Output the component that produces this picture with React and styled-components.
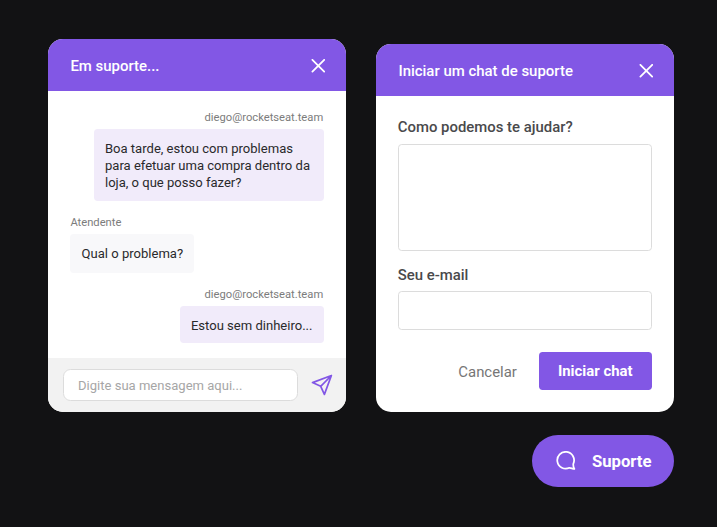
import React from "react";
import styled, { createGlobalStyle } from "styled-components";

const purple = "#8257e5";

const GlobalStyle = createGlobalStyle`
  * { box-sizing: border-box; }
  body { margin: 0; background: #121214; }
  button, input, textarea { font-family: inherit; }
`;

const Page = styled.main`
  width: 717px;
  height: 527px;
  display: flex;
  flex-direction: column;
  padding: 39.3px 42.6px 0 48px;
  gap: 22.6px;
  background: #121214;
  font-family: Roboto, sans-serif;
  overflow: hidden;
`;

const Panels = styled.div`
  display: flex;
  justify-content: space-between;
  align-items: flex-end;
`;

const Card = styled.section`
  display: flex;
  flex-direction: column;
  width: 298.4px;
  height: ${(p) => p.$height}px;
  border-radius: 15px;
  background: #fff;
  overflow: hidden;
`;

const CardHeader = styled.header`
  flex: none;
  height: 52.1px;
  padding: 1px 21.2px 0 22.4px;
  display: flex;
  align-items: center;
  justify-content: space-between;
  background: ${purple};
`;

const Title = styled.h2`
  margin: 0;
  font-size: 14.95px;
  line-height: 18px;
  font-weight: 500;
  color: #fff;
`;

const IconButton = styled.button`
  display: flex;
  padding: 0;
  border: 0;
  background: none;
`;

const Messages = styled.div`
  flex: 1;
  padding: 19.9px 22.4px 0;
  display: flex;
  flex-direction: column;
  gap: 15px;
`;

const Message = styled.div`
  display: flex;
  flex-direction: column;
  gap: 4.4px;
  align-items: ${(p) => (p.$own ? "flex-end" : "flex-start")};
`;

const Author = styled.span`
  padding-right: 0.8px;
  font-size: 11.2px;
  line-height: 13.5px;
  color: #7c7c7c;
`;

const bubblePadding = {
  long: "11.2px 14px 9.8px 11.2px",
  reply: "11.2px 11.2px 10.8px",
  short: "10.6px 11.5px 9.6px 11.2px",
};

const Bubble = styled.p`
  margin: 0;
  padding: ${(p) => bubblePadding[p.$shape]};
  border-radius: 3.7px;
  font-size: 13.05px;
  line-height: 17px;
  color: #29292b;
  white-space: pre;
  background: ${(p) => (p.$own ? "#f1ebfa" : "#f8f8fa")};
`;

const Composer = styled.footer`
  flex: none;
  height: 54px;
  padding: 0 13.4px 0 15px;
  display: flex;
  align-items: center;
  justify-content: space-between;
  background: #f2f2f2;
`;

const MessageInput = styled.input`
  width: 235px;
  height: 32px;
  padding: 1px 14px 0;
  border: 1px solid #dcdcdc;
  border-radius: 7.5px;
  background: #fff;
  font-size: 13.05px;
  outline: none;
  &::placeholder { color: #a6a6a6; opacity: 1; }
`;

const Form = styled.form`
  padding: 22px 22.2px 0 21.8px;
  display: flex;
  flex-direction: column;
`;

const Label = styled.label`
  font-size: 14.9px;
  line-height: 18px;
  font-weight: 500;
  color: #49494b;
`;

const Field = styled.input`
  display: block;
  width: 254px;
  height: ${(p) => p.$height}px;
  margin: ${(p) => p.$margin};
  border: 1px solid #dcdcdc;
  border-radius: 3.7px;
  background: #fff;
  resize: none;
  outline: none;
`;

const Actions = styled.div`
  display: flex;
  justify-content: flex-end;
  align-items: center;
  gap: 22.4px;
`;

const CancelButton = styled.button`
  padding: 1px 0 0;
  border: 0;
  background: none;
  font-size: 14.9px;
  color: #767676;
`;

const SubmitButton = styled.button`
  width: 113px;
  height: 37.5px;
  padding: 0.6px 1px 0 0;
  border: 0;
  border-radius: 3.7px;
  background: ${purple};
  font-size: 14.9px;
  font-weight: 700;
  color: #fff;
`;

const SupportButton = styled.button`
  align-self: flex-end;
  width: 142.6px;
  height: 52.4px;
  padding: 1px 22.9px 0 24px;
  display: flex;
  align-items: center;
  justify-content: space-between;
  border: 0;
  border-radius: 27px;
  background: ${purple};
  font-size: 16.7px;
  font-weight: 700;
  color: #fff;
`;

const CloseIcon = () => (
  <svg width="14" height="14" viewBox="0 0 14 14" fill="none" stroke="#fff" strokeWidth="1.8" strokeLinecap="round">
    <path d="M1.4 0.8 13.2 12.6M13.2 0.8 1.4 12.6" />
  </svg>
);

const SendIcon = () => (
  <svg width="22" height="22" viewBox="0 0 22 22" fill="none" stroke={purple} strokeWidth="1.7" strokeLinejoin="round" strokeLinecap="round">
    <path d="M20.4 1.5 1.5 8.6 9.7 12.3 13.4 20.4ZM20.4 1.5 9.7 12.3" />
  </svg>
);

const ChatIcon = () => (
  <svg width="20" height="20" viewBox="0 0 20 20" fill="none" stroke="#fff" strokeWidth="1.75" strokeLinejoin="round" strokeLinecap="round">
    <path d="M17.3 12.8A8.4 8.4 0 1 0 13.4 16.8C15.1 17 16.6 17.8 18.4 18C17.5 16.4 17.1 14.6 17.3 12.8Z" />
  </svg>
);

const messages = [
  { author: "diego@rocketseat.team", own: true, shape: "long", text: "Boa tarde, estou com problemas\npara efetuar uma compra dentro da\nloja, o que posso fazer?" },
  { author: "Atendente", own: false, shape: "reply", text: "Qual o problema?" },
  { author: "diego@rocketseat.team", own: true, shape: "short", text: "Estou sem dinheiro..." },
];

const Header = ({ title }) => (
  <CardHeader>
    <Title>{title}</Title>
    <IconButton type="button" aria-label="Fechar"><CloseIcon /></IconButton>
  </CardHeader>
);

export default function App() {
  return (
    <Page>
      <GlobalStyle />
      <Panels>
        <Card $height={372.7}>
          <Header title="Em suporte..." />
          <Messages>
            {messages.map((m) => (
              <Message key={m.text} $own={m.own}>
                <Author>{m.author}</Author>
                <Bubble $own={m.own} $shape={m.shape}>{m.text}</Bubble>
              </Message>
            ))}
          </Messages>
          <Composer>
            <MessageInput placeholder="Digite sua mensagem aqui..." />
            <IconButton type="button" aria-label="Enviar"><SendIcon /></IconButton>
          </Composer>
        </Card>
        <Card $height={368}>
          <Header title="Iniciar um chat de suporte" />
          <Form>
            <Label htmlFor="question">Como podemos te ajudar?</Label>
            <Field as="textarea" id="question" $height={107} $margin="7.5px 0 15px" />
            <Label htmlFor="email">Seu e-mail</Label>
            <Field id="email" $height={39} $margin="7.5px 0 22.3px" />
            <Actions>
              <CancelButton type="button">Cancelar</CancelButton>
              <SubmitButton type="button">Iniciar chat</SubmitButton>
            </Actions>
          </Form>
        </Card>
      </Panels>
      <SupportButton type="button">
        <ChatIcon />
        Suporte
      </SupportButton>
    </Page>
  );
}
